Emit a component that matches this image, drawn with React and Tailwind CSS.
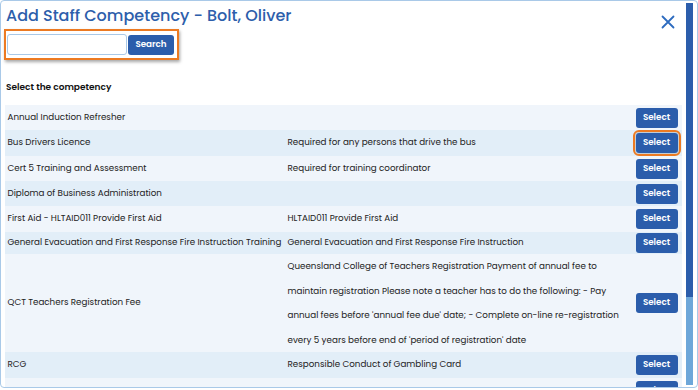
import React from "react";

const rows = [
  { name: "Annual Induction Refresher", desc: [], h: "h-[25px]", dark: false },
  { name: "Bus Drivers Licence", desc: ["Required for any persons that drive the bus"], h: "h-[26px]", dark: true, hl: true },
  { name: "Cert 5 Training and Assessment", desc: ["Required for training coordinator"], h: "h-[25px]", dark: false },
  { name: "Diploma of Business Administration", desc: [], h: "h-[25px]", dark: true },
  { name: "First Aid - HLTAID011 Provide First Aid", desc: ["HLTAID011 Provide First Aid"], h: "h-[26px]", dark: false },
  { name: "General Evacuation and First Response Fire Instruction Training", desc: ["General Evacuation and First Response Fire Instruction"], h: "h-[22px]", dark: true },
  {
    name: "QCT Teachers Registration Fee",
    desc: [
      "Queensland College of Teachers Registration Payment of annual fee to",
      "maintain registration Please note a teacher has to do the following: - Pay",
      "annual fees before 'annual fee due' date; - Complete on-line re-registration",
      "every 5 years before end of 'period of registration' date",
    ],
    h: "h-[98px]",
    dark: false,
  },
  { name: "RCG", desc: ["Responsible Conduct of Gambling Card"], h: "h-[26px]", dark: true },
  { name: "", desc: [], h: "h-[26px]", dark: false },
];

function Row({ r }) {
  return (
    <div className={`flex items-center ${r.h} ${r.dark ? "bg-[#e2eef8]" : "bg-[#f0f5fb]"}`}>
      <div className="w-[283px] shrink-0 pl-[3px] whitespace-nowrap">{r.name}</div>
      <div className="flex-1 flex flex-col">
        {r.desc.map((d, i) => (
          <div key={i} className={`whitespace-nowrap ${r.desc.length > 1 ? "leading-[24.5px]" : ""}`}>{d}</div>
        ))}
      </div>
      <div className="w-[50px] shrink-0 flex justify-end pr-[4px]">
        <div className={`rounded-[3px] ${r.hl ? "outline-2 outline-[#ec7a22] outline-offset-[1px] shadow-[0_0_3px_rgba(0,0,0,0.4)]" : ""}`}>
          <div className="w-[42px] h-[20px] rounded-[3px] bg-[#2b5dab] text-white flex items-center justify-center text-[8.75px] font-semibold">Select</div>
        </div>
      </div>
    </div>
  );
}

export default function App() {
  return (
    <div className="w-[698px] h-[390px] bg-white overflow-hidden" style={{ fontFamily: "'Poppins', 'Open Sans', sans-serif" }}>
      <div className="w-[698px] h-[388px] border-[1.5px] border-[#a9c9e8] rounded-[4px] flex overflow-hidden">
        <div className="w-[684px] shrink-0 flex flex-col overflow-hidden">
          <div className="flex justify-between items-start">
            <div className="pl-[5px] pt-[6px] text-[16px] font-medium text-[#2d5eab] leading-[18px]">Add Staff Competency - Bolt, Oliver</div>
            <div className="pt-[14px] pr-[10px]">
              <svg width="14" height="14" viewBox="0 0 14 14" fill="none" stroke="#2d6bbf" strokeWidth="1.8" strokeLinecap="round">
                <path d="M1.5 1.5 L12.5 12.5 M12.5 1.5 L1.5 12.5" />
              </svg>
            </div>
          </div>
          <div className="pl-[3px]">
            <div className="w-[175px] h-[31px] border-2 border-[#ec7a22] shadow-[1px_2px_3px_rgba(0,0,0,0.35)] flex items-center pl-[1px] gap-[1px]">
              <div className="w-[120px] h-[21px] border border-[#a9c9e8] rounded-[3px] bg-white"></div>
              <div className="w-[46px] h-[20px] rounded-[3px] bg-[#2b5dab] text-white text-[8.75px] font-semibold flex items-center justify-center">Search</div>
            </div>
          </div>
          <div className="pl-[5px] pt-[20px] text-[9px] font-semibold text-[#111] leading-[14px]">Select the competency</div>
          <div className="pl-[3.5px] pt-[11px] text-[8.75px] text-[#222]">
            <div className="w-[677px]">
              {rows.map((r, i) => (
                <Row key={i} r={r} />
              ))}
            </div>
          </div>
        </div>
        <div className="flex-1 pt-[2px] pb-[2px] flex flex-col pl-[1px]">
          <div className="w-[7px] flex-1 flex flex-col bg-[#6ea7d9]">
            <div className="h-[294px] bg-[#2b5dab]"></div>
          </div>
        </div>
      </div>
    </div>
  );
}
